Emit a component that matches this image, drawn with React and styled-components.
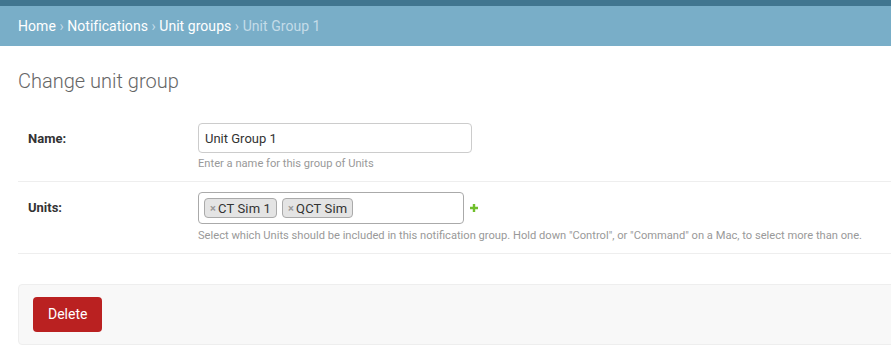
import React from 'react';
import styled, { createGlobalStyle } from 'styled-components';

const GlobalStyle = createGlobalStyle`
    body {
        margin: 0;
        background: #fff;
        font-family: Roboto, "Liberation Sans", sans-serif;
        color: #333;
        overflow: hidden;
    }
`;

const HeaderStrip = styled.div`
    height: 6px;
    background: #417690;
`;

const Breadcrumbs = styled.div`
    background: #79aec8;
    padding: 10px 18px;
    font-size: 14px;
    line-height: 20px;
    letter-spacing: 0.05px;
    color: #c4dce8;
    white-space: nowrap;
`;

const Crumb = styled.a`
    color: #fff;
    text-decoration: none;
`;

const Content = styled.div`
    padding: 23px 18px 20px;
    min-width: 960px;
`;

const Title = styled.h1`
    margin: 0 0 20px;
    font-size: 20px;
    line-height: 24px;
    font-weight: 300;
    color: #666;
`;

const Fieldset = styled.fieldset`
    border: none;
    margin: 0 0 30px;
    padding: 0;
`;

const FormRow = styled.div`
    display: flex;
    align-items: baseline;
    padding: 10px;
    border-bottom: 1px solid #eee;
`;

const Label = styled.label`
    flex: none;
    width: 170px;
    font-size: 13px;
    font-weight: bold;
    color: #333;
`;

const Field = styled.div`
    display: flex;
    flex-direction: column;
`;

const TextInput = styled.input`
    box-sizing: border-box;
    width: 274px;
    height: 30px;
    padding: 5px 6px;
    border: 1px solid #ccc;
    border-radius: 4px;
    font-family: Roboto, "Liberation Sans", sans-serif;
    font-size: 13px;
    color: #333;
    outline: none;
`;

const Help = styled.div`
    margin-top: ${p => p.$gap || 4}px;
    font-size: 11.15px;
    line-height: 14px;
    color: #999;
    white-space: nowrap;
`;

const SelectLine = styled.div`
    display: flex;
    align-items: center;
`;

const MultiSelect = styled.div`
    box-sizing: border-box;
    width: 266px;
    height: 32px;
    display: flex;
    align-items: center;
    gap: 5px;
    padding: 0 5px;
    border: 1px solid #aaa;
    border-radius: 4px;
`;

const Tag = styled.span`
    display: inline-flex;
    align-items: center;
    height: 20px;
    box-sizing: border-box;
    padding: 0 5px;
    background: #e4e4e4;
    border: 1px solid #aaa;
    border-radius: 4px;
    font-size: 13px;
    letter-spacing: 0.15px;
    color: #333;
`;

const Remove = styled.span`
    margin-right: 2px;
    font-size: 11px;
    font-weight: bold;
    color: #999;
`;

const AddLink = styled.a`
    display: inline-flex;
    margin-left: 5px;
`;

const SubmitRow = styled.div`
    padding: 12px 14px;
    background: #f8f8f8;
    border: 1px solid #eee;
    border-radius: 4px;
`;

const DeleteLink = styled.a`
    display: inline-block;
    box-sizing: border-box;
    height: 35px;
    padding: 10px 15px;
    line-height: 15px;
    font-size: 14px;
    color: #fff;
    background: #ba2121;
    border-radius: 4px;
    text-decoration: none;
`;

const PlusIcon = () => (
    <svg width="10" height="10" viewBox="0 0 10 10">
        <path d="M3.8 1h2.4v2.8H9v2.4H6.2V9H3.8V6.2H1V3.8h2.8z" fill="#70bf2b" />
    </svg>
);

const App = () => {
  return (
      <>
          <GlobalStyle />
          <HeaderStrip />
          <Breadcrumbs>
              <Crumb href="#">Home</Crumb> › <Crumb href="#">Notifications</Crumb> › <Crumb href="#">Unit groups</Crumb> › Unit Group 1
          </Breadcrumbs>
          <Content>
              <Title>Change unit group</Title>
              <Fieldset>
                  <FormRow>
                      <Label>Name:</Label>
                      <Field>
                          <TextInput defaultValue="Unit Group 1" />
                          <Help>Enter a name for this group of Units</Help>
                      </Field>
                  </FormRow>
                  <FormRow>
                      <Label>Units:</Label>
                      <Field>
                          <SelectLine>
                              <MultiSelect>
                                  <Tag><Remove>×</Remove>CT Sim 1</Tag>
                                  <Tag><Remove>×</Remove>QCT Sim</Tag>
                              </MultiSelect>
                              <AddLink href="#"><PlusIcon /></AddLink>
                          </SelectLine>
                          <Help $gap={5}>Select which Units should be included in this notification group. Hold down "Control", or "Command" on a Mac, to select more than one.</Help>
                      </Field>
                  </FormRow>
              </Fieldset>
              <SubmitRow>
                  <DeleteLink href="#">Delete</DeleteLink>
              </SubmitRow>
          </Content>
      </>
  );
};

export default App;
